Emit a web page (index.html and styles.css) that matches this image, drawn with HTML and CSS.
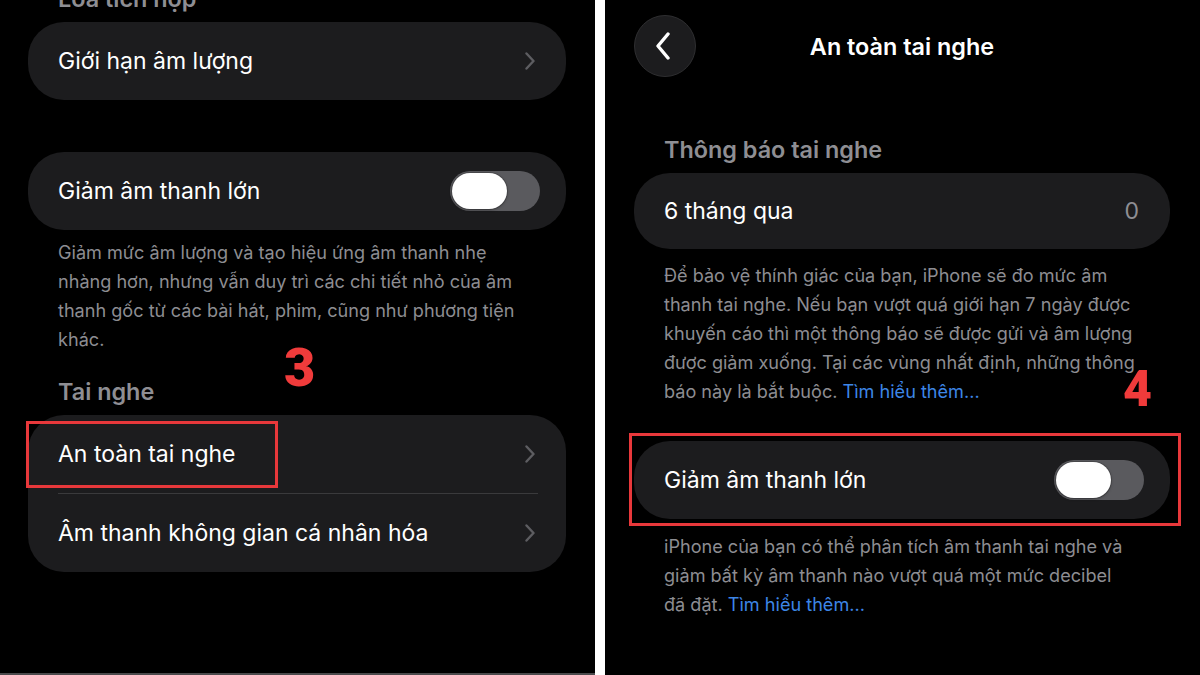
FILE: index.html
```html
<!DOCTYPE html>
<html lang="vi">
<head>
<meta charset="utf-8">
<title>An toàn tai nghe</title>
<link rel="stylesheet" href="styles.css">
</head>
<body>
<div class="screen">
  <section class="panel panel-left">
    <div class="content shift-up">
      <h3 class="group-title">Loa tích hợp</h3>
      <div class="card">
        <div class="row">
          <span class="label">Giới hạn âm lượng</span>
          <svg class="chev" width="10" height="18" viewBox="0 0 10 18"><polyline points="1.5,1.5 8.5,9 1.5,16.5" fill="none" stroke="#5d5d61" stroke-width="2.4" stroke-linecap="round" stroke-linejoin="round"/></svg>
        </div>
      </div>
      <div class="card card-spaced">
        <div class="row row-toggle">
          <span class="label">Giảm âm thanh lớn</span>
          <span class="toggle"><span class="knob"></span></span>
        </div>
      </div>
      <p class="note">Giảm mức âm lượng và tạo hiệu ứng âm thanh nhẹ<br>nhàng hơn, nhưng vẫn duy trì các chi tiết nhỏ của âm<br>thanh gốc từ các bài hát, phim, cũng như phương tiện<br>khác.</p>
      <div class="group-head">
        <h3 class="group-title">Tai nghe</h3>
        <span class="step step-3">3</span>
      </div>
      <div class="card">
        <div class="row">
          <span class="label">An toàn tai nghe</span>
          <svg class="chev" width="10" height="18" viewBox="0 0 10 18"><polyline points="1.5,1.5 8.5,9 1.5,16.5" fill="none" stroke="#5d5d61" stroke-width="2.4" stroke-linecap="round" stroke-linejoin="round"/></svg>
          <span class="mark mark-item"></span>
        </div>
        <div class="sep"></div>
        <div class="row">
          <span class="label">Âm thanh không gian cá nhân hóa</span>
          <svg class="chev" width="10" height="18" viewBox="0 0 10 18"><polyline points="1.5,1.5 8.5,9 1.5,16.5" fill="none" stroke="#5d5d61" stroke-width="2.4" stroke-linecap="round" stroke-linejoin="round"/></svg>
        </div>
      </div>
    </div>
  </section>

  <section class="panel panel-right">
    <header class="nav">
      <span class="back">
        <svg width="16" height="28" viewBox="0 0 16 28"><polyline points="13,2 3,14 13,26" fill="none" stroke="#ffffff" stroke-width="3.4" stroke-linecap="round" stroke-linejoin="round"/></svg>
      </span>
      <h1 class="nav-title">An toàn tai nghe</h1>
      <span class="nav-spacer"></span>
    </header>
    <div class="content">
      <h3 class="group-title group-title-first">Thông báo tai nghe</h3>
      <div class="card">
        <div class="row row-short">
          <span class="label">6 tháng qua</span>
          <span class="value">0</span>
        </div>
      </div>
      <p class="note note-wide">Để bảo vệ thính giác của bạn, iPhone sẽ đo mức âm<br>thanh tai nghe. Nếu bạn vượt quá giới hạn 7 ngày được<br>khuyến cáo thì một thông báo sẽ được gửi và âm lượng<br>được giảm xuống. Tại các vùng nhất định, những thông<br>báo này là bắt buộc. <a class="link">Tìm hiểu thêm...</a></p>
      <div class="card card-marked">
        <span class="step step-4">4</span>
        <div class="row row-toggle">
          <span class="label">Giảm âm thanh lớn</span>
          <span class="toggle"><span class="knob"></span></span>
        </div>
        <span class="mark mark-card"></span>
      </div>
      <p class="note note-wide note-after">iPhone của bạn có thể phân tích âm thanh tai nghe và<br>giảm bất kỳ âm thanh nào vượt quá một mức decibel<br>đã đặt. <a class="link">Tìm hiểu thêm...</a></p>
    </div>
  </section>
</div>
</body>
</html>
```

FILE: styles.css
```css
* { box-sizing: border-box; }

body {
  margin: 0;
  background: #ffffff;
  font-family: Inter, "Noto Sans", "Liberation Sans", sans-serif;
}

.screen {
  display: grid;
  grid-template-columns: 595px 595px;
  column-gap: 10px;
  width: 1200px;
  height: 675px;
  overflow: hidden;
}

.panel {
  position: relative;
  height: 675px;
  background: #000000;
  overflow: hidden;
}

.panel-left {
  padding: 0 29px 0 28px;
  border-bottom: 2px solid #4a4a4c;
}

.panel-right {
  padding: 0 30px 0 29px;
}

.shift-up { margin-top: -16px; }

.group-title {
  margin: 0 0 8px 30px;
  font-size: 23.4px;
  line-height: 30px;
  font-weight: 600;
  color: #8e8e93;
}

.group-head {
  position: relative;
  margin-top: 23px;
}

.card {
  position: relative;
  background: #1c1c1e;
  border-radius: 36px;
}

.card-spaced { margin-top: 52px; }

.row {
  position: relative;
  height: 78px;
  display: flex;
  align-items: center;
  justify-content: space-between;
  padding: 0 31px 0 30px;
}

.row-short { height: 76px; }

.row-toggle { padding-right: 26px; }

.label {
  color: #ffffff;
  font-size: 23px;
  letter-spacing: 0;
}

.value {
  color: #8e8e93;
  font-size: 23px;
}

.chev { display: block; }

.sep {
  height: 1px;
  margin: 0 28px 0 30px;
  background: #3a3a3c;
}

.toggle {
  position: relative;
  width: 90px;
  height: 40px;
  border-radius: 20px;
  background: #5a5a5e;
}

.knob {
  position: absolute;
  left: 2px;
  top: 2px;
  width: 55px;
  height: 36px;
  border-radius: 18px;
  background: #ffffff;
  box-shadow: 0 0 0 1px rgba(0,0,0,0.15), 0 1px 3px rgba(0,0,0,0.35);
}

.note {
  margin: 8px 0 0 30px;
  font-size: 18.1px;
  line-height: 29px;
  color: #8d8d92;
}

.note-wide { margin-top: 12px; }
.note-after { margin-top: 13px; }

.link { color: #3d86e6; }

/* nav */
.nav {
  display: grid;
  grid-template-columns: 62px 1fr 62px;
  align-items: center;
  padding-top: 15px;
}

.back {
  width: 62px;
  height: 62px;
  border-radius: 50%;
  background: #1c1c1e;
  border: 1px solid #2e2e30;
  display: flex;
  align-items: center;
  justify-content: center;
  padding-right: 4px;
}

.back svg { display: block; }

.nav-title {
  margin: 0;
  text-align: center;
  font-size: 23.4px;
  font-weight: 600;
  color: #ffffff;
}

.group-title-first { margin-top: 58px; }

.card-marked { margin-top: 35px; }

/* annotations */
.mark {
  position: absolute;
  border: 3px solid #e8383b;
  pointer-events: none;
}

.mark-item {
  left: -2px;
  top: 6px;
  width: 252px;
  height: 67px;
}

.mark-card {
  left: -5px;
  top: -8px;
  right: -11px;
  bottom: -7px;
}

.step {
  position: absolute;
  font-family: Roboto, "Liberation Sans", Arial, sans-serif;
  font-weight: 900;
  color: #f03b3b;
  line-height: 1;
}

.step-3 {
  left: 256px;
  top: -36px;
  font-size: 54px;
}

.step-4 {
  right: 18px;
  top: -77px;
  font-size: 50px;
}
```
